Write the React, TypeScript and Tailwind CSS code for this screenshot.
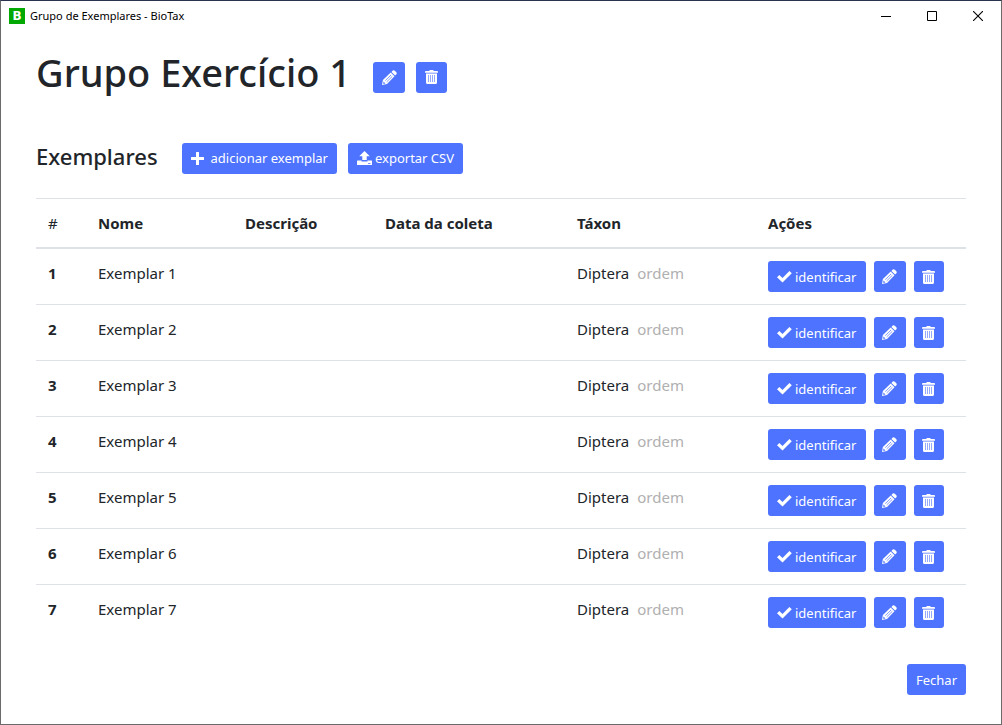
import type { ButtonHTMLAttributes, ReactNode } from "react";

function PencilIcon() {
  return (
    <svg width="15" height="15" viewBox="0 0 15 15" aria-hidden="true">
      <path
        fill="currentColor"
        d="M0 15 .9 10 8.7 2.500 12.500 6.300 5 14ZM9.400 1.900 10.800.6Q11.800-.2 12.800.7L14.300 2.200Q15.200 3.200 14.400 4.200L13.100 5.600Z"
      />
      <path stroke="#4d73ff" strokeWidth="0.7" fill="none" d="M3.300 10.600 9 5M4.700 11.900 10.300 6.300" />
      <path fill="#4d73ff" d="M1.500 11.600 3.400 13.500 1.300 13.900Z" />
    </svg>
  );
}

function TrashIcon() {
  return (
    <svg width="13" height="14" viewBox="0 0 13 14" aria-hidden="true">
      <path
        fill="currentColor"
        d="M4.500 0H8.500V1H12Q13 1 13 2V2.700H0V2Q0 1 1 1H4.500ZM1 3.500H12V12.500Q12 14 10.500 14H2.500Q1 14 1 12.500Z"
      />
      <path fill="#4d73ff" fillOpacity="0.6" d="M3 5H4V12H3ZM5 5H6V12H5ZM7 5H8V12H7ZM9 5H10V12H9Z" />
    </svg>
  );
}

function PlusIcon() {
  return (
    <svg width="13" height="13" viewBox="0 0 13 13" aria-hidden="true">
      <path
        fill="currentColor"
        d="M5.500 0H7.500Q8 0 8 .5V5H12.500Q13 5 13 5.500V7.500Q13 8 12.500 8H8V12.500Q8 13 7.500 13H5.500Q5 13 5 12.500V8H.5Q0 8 0 7.500V5.500Q0 5 .5 5H5V.5Q5 0 5.500 0Z"
      />
    </svg>
  );
}

function UploadIcon() {
  return (
    <svg width="15" height="14" viewBox="0 0 15 14" aria-hidden="true">
      <path
        fill="currentColor"
        fillRule="evenodd"
        d="M7.500 0 12.800 5.300H9.700V9H5.300V5.300H2.200ZM0 10Q0 9.500 .5 9.500H4.500V10.500H10.500V9.500H14.500Q15 9.500 15 10V13.500Q15 14 14.500 14H.5Q0 14 0 13.500ZM11 12V12.800H13.500V12Z"
      />
    </svg>
  );
}

function CheckIcon() {
  return (
    <svg width="15" height="12" viewBox="0 0 15 12" aria-hidden="true">
      <path fill="currentColor" d="M0 6.200 2.400 3.900 5.500 6.900 12.400 0 14.800 2.300 5.500 11.500Z" />
    </svg>
  );
}

type ActionProps = ButtonHTMLAttributes<HTMLButtonElement> & { children: ReactNode };

function ActionButton({ children, className = "", ...rest }: ActionProps) {
  return (
    <button
      type="button"
      className={`inline-flex h-[31px] shrink-0 items-center justify-center rounded-[3px] bg-[#4d73ff] text-[13px] whitespace-nowrap text-white hover:bg-[#3a62f5] ${className}`}
      {...rest}
    >
      {children}
    </button>
  );
}

function TitleBar() {
  return (
    <header className="flex h-[29px] items-center justify-between bg-white text-black">
      <div className="flex items-center gap-[5px] pl-2">
        <span className="flex size-4 items-center justify-center bg-[#00a800] font-['DejaVu_Sans'] text-[12px] font-bold text-white">
          B
        </span>
        <span className="text-[11px]">Grupo de Exemplares - BioTax</span>
      </div>
      <div className="flex">
        <button type="button" aria-label="Minimizar" className="flex h-7 w-[46px] items-center justify-center">
          <svg width="10" height="10" viewBox="0 0 10 10" shapeRendering="crispEdges" aria-hidden="true">
            <path fill="currentColor" d="M0 5h10v1H0z" />
          </svg>
        </button>
        <button type="button" aria-label="Maximizar" className="flex h-7 w-[46px] items-center justify-center">
          <svg width="10" height="10" viewBox="0 0 10 10" aria-hidden="true">
            <path fill="none" stroke="currentColor" d="M.5.5h9v9h-9z" />
          </svg>
        </button>
        <button type="button" aria-label="Fechar janela" className="flex h-7 w-[46px] items-center justify-center">
          <svg width="10" height="10" viewBox="0 0 10 10" aria-hidden="true">
            <path fill="none" stroke="currentColor" strokeWidth="1.1" d="M0 0 10 10M10 0 0 10" />
          </svg>
        </button>
      </div>
    </header>
  );
}

const specimens = [1, 2, 3, 4, 5, 6, 7].map((id) => ({
  id,
  name: `Exemplar ${id}`,
  description: "",
  date: "",
  taxon: "Diptera",
  rank: "ordem",
}));

const headCell = "border-t border-b-2 border-[#dee2e6] px-3 py-3";
const bodyCell = "border-t border-[#dee2e6] px-3 py-3 align-top group-first:border-t-0";

export default function App() {
  return (
    <div className="min-h-screen border border-t-[#28344f] border-[#6b6b6b] bg-white font-['Noto_Sans','Open_Sans',sans-serif] text-[15px] leading-6 text-[#212529]">
      <TitleBar />
      <main className="px-[35px] pt-[18px] pb-7">
        <div className="flex items-center">
          <h1 className="text-[38px] leading-12 font-medium">Grupo Exercício 1</h1>
          <ActionButton aria-label="Editar grupo" className="mt-[10px] ml-[22px] w-8">
            <PencilIcon />
          </ActionButton>
          <ActionButton aria-label="Excluir grupo" className="mt-[10px] ml-[11px] w-[31px]">
            <TrashIcon />
          </ActionButton>
        </div>

        <div className="mt-[42px] mb-6 flex items-center">
          <h2 className="text-[22px] leading-9 font-medium">Exemplares</h2>
          <ActionButton className="mt-1 ml-6 gap-[7px] px-[9px]">
            <PlusIcon />
            adicionar exemplar
          </ActionButton>
          <ActionButton className="mt-1 ml-[11px] gap-[3px] px-[9px]">
            <UploadIcon />
            exportar CSV
          </ActionButton>
        </div>

        <table className="w-full table-fixed border-separate border-spacing-0 text-left">
          <colgroup>
            <col className="w-[50px]" />
            <col className="w-[147px]" />
            <col className="w-[140px]" />
            <col className="w-[192px]" />
            <col className="w-[191px]" />
            <col className="w-[210px]" />
          </colgroup>
          <thead>
            <tr>
              <th scope="col" className={`${headCell} font-normal`}>#</th>
              <th scope="col" className={`${headCell} font-bold`}>Nome</th>
              <th scope="col" className={`${headCell} font-bold`}>Descrição</th>
              <th scope="col" className={`${headCell} font-bold`}>Data da coleta</th>
              <th scope="col" className={`${headCell} font-bold`}>Táxon</th>
              <th scope="col" className={`${headCell} font-bold`}>Ações</th>
            </tr>
          </thead>
          <tbody>
            {specimens.map((s) => (
              <tr key={s.id} className="group">
                <th scope="row" className={`${bodyCell} font-bold`}>{s.id}</th>
                <td className={bodyCell}>{s.name}</td>
                <td className={bodyCell}>{s.description}</td>
                <td className={bodyCell}>{s.date}</td>
                <td className={bodyCell}>
                  {s.taxon}
                  <span className="ml-2 text-[#b0b0b0]">{s.rank}</span>
                </td>
                <td className={bodyCell}>
                  <div className="flex gap-2">
                    <ActionButton className="gap-[3px] px-[9px]">
                      <CheckIcon />
                      identificar
                    </ActionButton>
                    <ActionButton aria-label={`Editar ${s.name}`} className="w-8">
                      <PencilIcon />
                    </ActionButton>
                    <ActionButton aria-label={`Excluir ${s.name}`} className="w-[30px]">
                      <TrashIcon />
                    </ActionButton>
                  </div>
                </td>
              </tr>
            ))}
          </tbody>
        </table>

        <div className="mt-6 flex justify-end">
          <ActionButton className="px-[9px]">Fechar</ActionButton>
        </div>
      </main>
    </div>
  );
}
